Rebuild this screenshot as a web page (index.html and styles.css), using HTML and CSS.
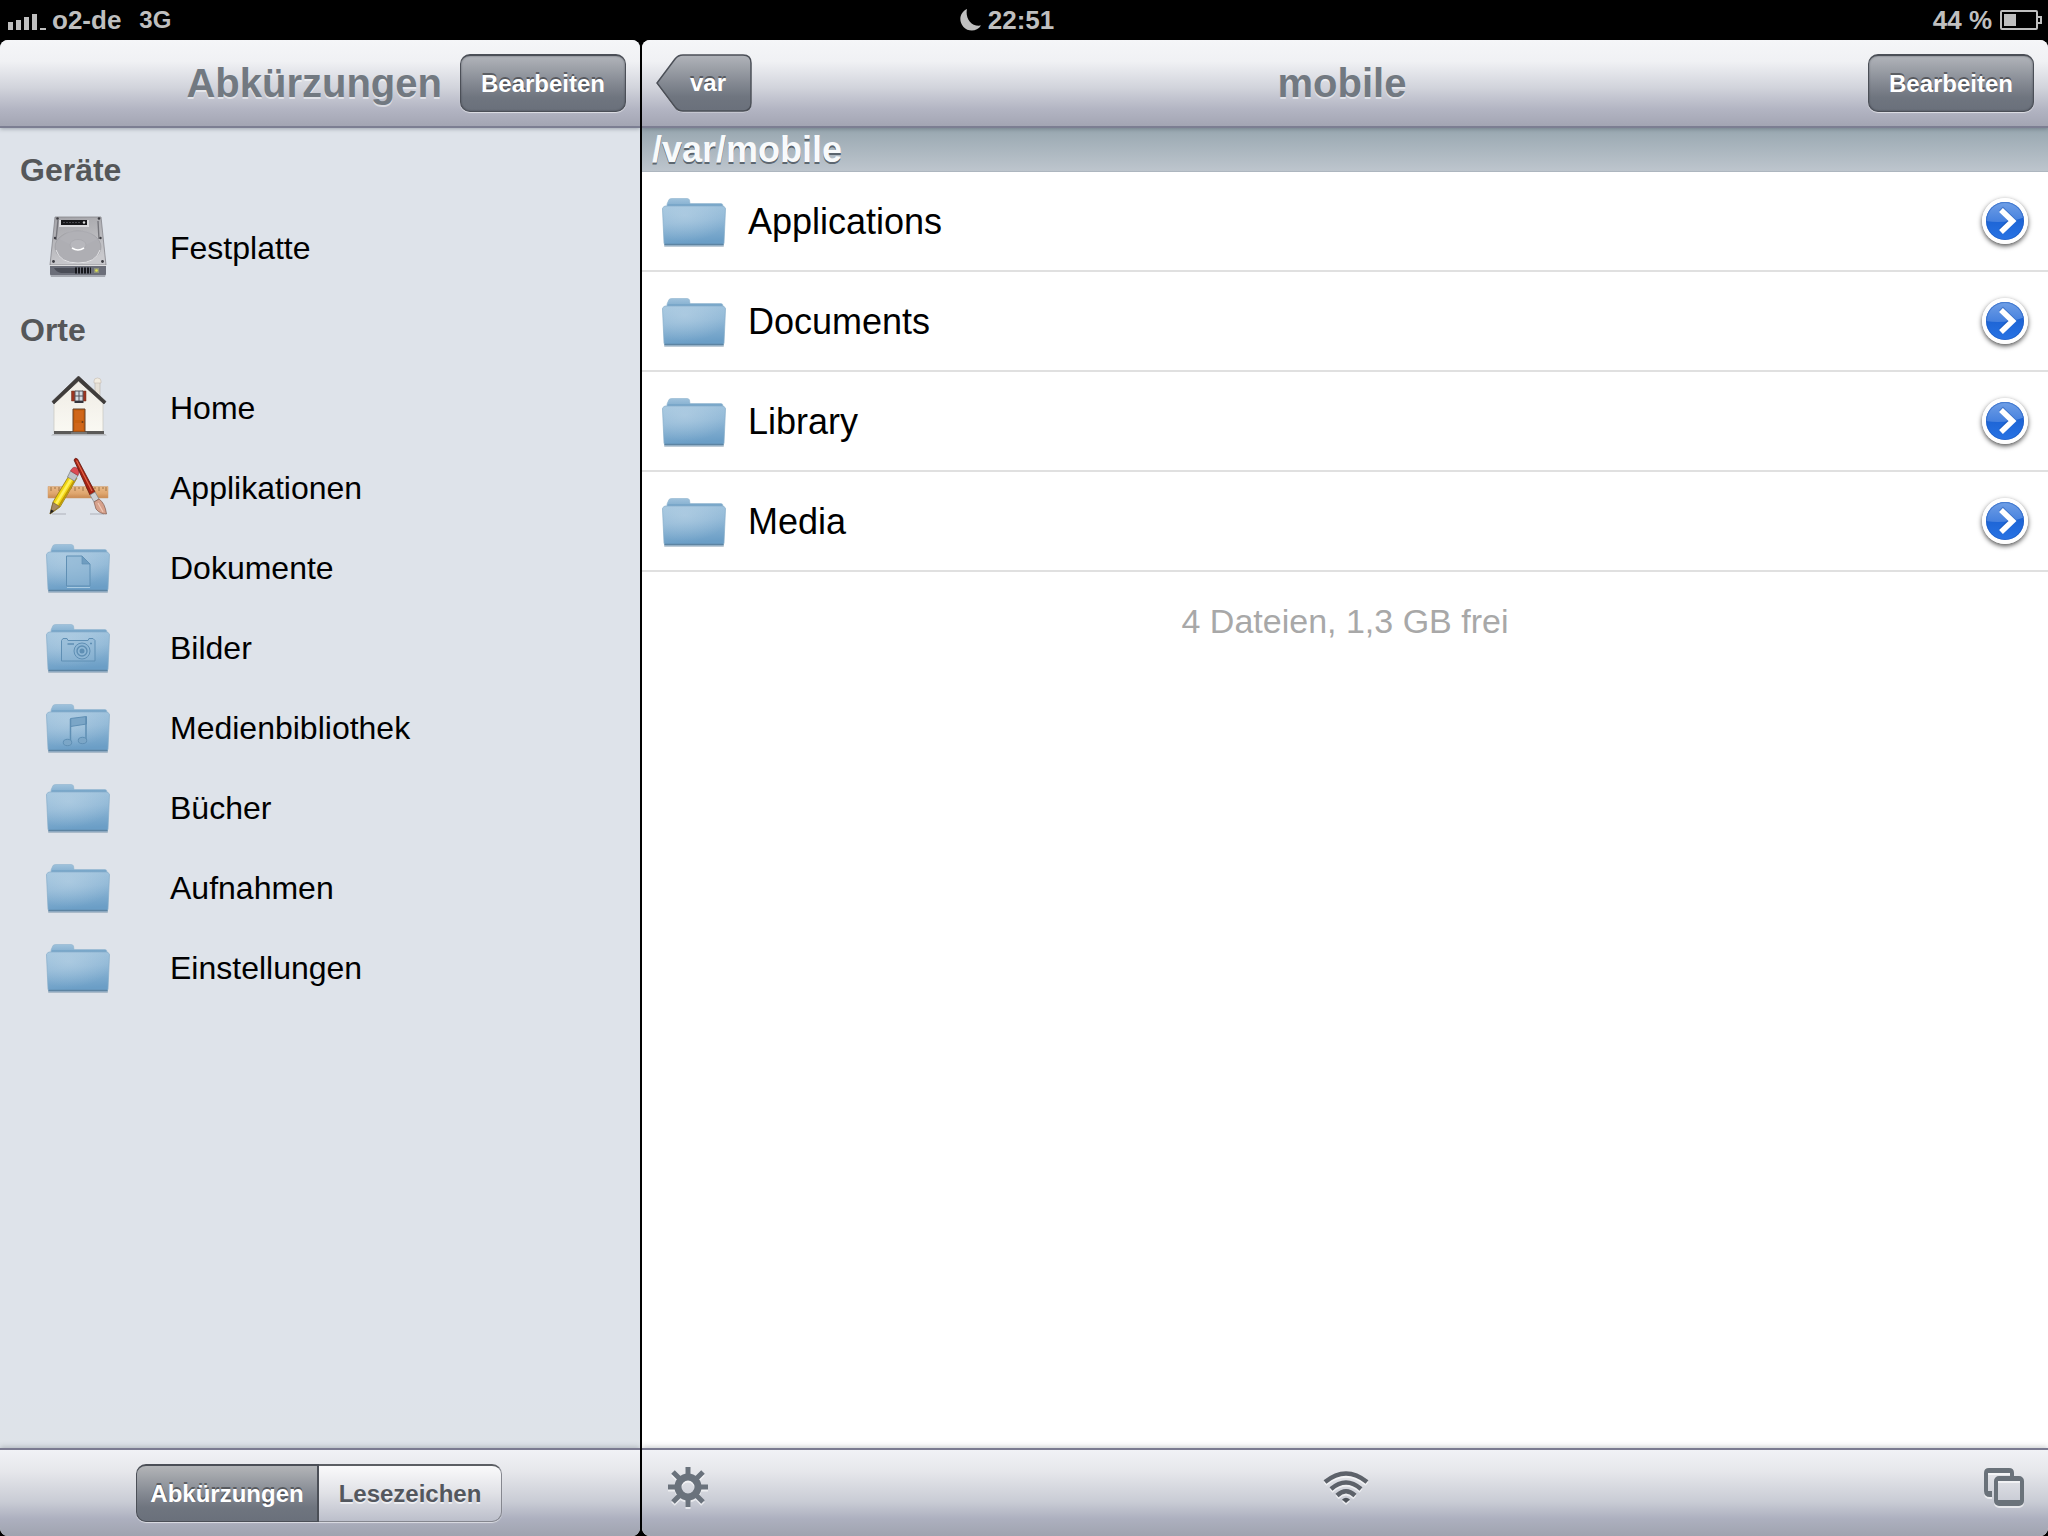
FILE: index.html
```html
<!DOCTYPE html>
<html lang="de">
<head>
<meta charset="utf-8">
<meta name="viewport" content="width=device-width, initial-scale=1">
<title>mobile</title>
<link rel="stylesheet" href="styles.css">
</head>
<body>
<svg class="defs" aria-hidden="true">
  <defs>
    <linearGradient id="folder-front" x1="0" y1="0" x2="0.15" y2="1">
      <stop offset="0" stop-color="#a4c6df"/><stop offset="0.45" stop-color="#92b9d7"/><stop offset="1" stop-color="#6b9ec6"/>
    </linearGradient>
    <radialGradient id="folder-glow" cx="0.35" cy="0.25" r="0.7">
      <stop offset="0" stop-color="#c6dbea" stop-opacity="0.4"/><stop offset="1" stop-color="#c6dbea" stop-opacity="0"/>
    </radialGradient>
    <linearGradient id="folder-back" x1="0" y1="0" x2="0" y2="1">
      <stop offset="0" stop-color="#9fc2dc"/><stop offset="1" stop-color="#6d9fc5"/>
    </linearGradient>
    <linearGradient id="back-fill" x1="0" y1="0" x2="0" y2="1">
      <stop offset="0" stop-color="#b1b4ba"/><stop offset="0.5" stop-color="#848992"/><stop offset="0.75" stop-color="#6f757f"/><stop offset="1" stop-color="#6a707b"/>
    </linearGradient>
    <linearGradient id="disc-top" x1="0" y1="0" x2="0" y2="1">
      <stop offset="0" stop-color="#6f9fe6"/><stop offset="1" stop-color="#4580de"/>
    </linearGradient>
    <linearGradient id="disc-bottom" x1="0" y1="0" x2="0" y2="1">
      <stop offset="0.4" stop-color="#1b62d3"/><stop offset="1" stop-color="#2873e4"/>
    </linearGradient>
    <linearGradient id="disk-top" x1="0" y1="0" x2="0.3" y2="1">
      <stop offset="0" stop-color="#a3a3a8"/><stop offset="0.5" stop-color="#b6b6ba"/><stop offset="1" stop-color="#c9c9cd"/>
    </linearGradient>
    <linearGradient id="house-wall" x1="0" y1="0" x2="0" y2="1">
      <stop offset="0" stop-color="#eeebe4"/><stop offset="1" stop-color="#faf9f3"/>
    </linearGradient>
    <linearGradient id="ruler-wood" x1="0" y1="0" x2="0" y2="1">
      <stop offset="0" stop-color="#e9b988"/><stop offset="0.6" stop-color="#dfa66e"/><stop offset="1" stop-color="#c98a52"/>
    </linearGradient>
    <symbol id="folder" viewBox="0 0 64 64">
      <rect x="2" y="54" width="60" height="3" rx="1" fill="#5d7e98" opacity="0.4"/>
      <path d="M5 14 L7 9.500 Q8 8.500 10 8.500 H25 Q27 8.500 27.500 10 L28 13.500 H59 Q61 13.500 61 16 V22 H5Z" fill="url(#folder-back)" stroke="#8fb3ce" stroke-width="0.6"/>
      <path d="M6 15 H60" stroke="#6b9cc2"/>
      <path d="M0.500 18.500 Q1.500 16 3.500 16 H60.500 Q62.500 16 63.500 18.500 L62 53 Q61.800 55 60 55 H4 Q2.200 55 2 53Z" fill="url(#folder-front)" stroke="#86adca" stroke-width="0.7"/>
      <path d="M1 18 Q2 16.500 3.500 16.500 H60.500 Q62 16.500 63 18 L61.500 53 H2.500Z" fill="url(#folder-glow)"/>
      <path d="M2.500 54.500 H61.500" stroke="#5d84a2" stroke-width="1.500"/>
    </symbol>
    <symbol id="disclosure" viewBox="0 0 46 46">
      <circle cx="23" cy="23" r="23" fill="#fff"/>
      <circle cx="23" cy="23" r="19" fill="url(#disc-bottom)"/>
      <path d="M4 23 A19 19 0 0 1 42 23 V19.500 Q23 26 4 23Z" fill="url(#disc-top)"/>
      <circle cx="23" cy="23" r="18.500" fill="none" stroke="#1d57b8" stroke-opacity="0.5"/>
      <path d="M19 12 L30 23 L19 34" fill="none" stroke="#164da8" stroke-width="5.500" opacity="0.4" transform="translate(0 -1.500)"/>
      <path d="M19 12 L30.500 23 L19 34" fill="none" stroke="#fff" stroke-width="5.500"/>
    </symbol>
  </defs>
</svg>

<header class="status">
  <div class="status-left">
    <svg class="signal" viewBox="0 0 38 16" role="img" aria-label="Signal"><path d="M0 8h5v8H0zM8 6h5v10H8zM16 3h5v13h-5zM24 0h5v16h-5zM32 14h6v2h-6z" fill="#bfbfbf"/></svg>
    <span>o2-de</span>
    <span class="network">3G</span>
  </div>
  <div class="clock">
    <svg class="moon" viewBox="0 0 21 22" aria-hidden="true"><path d="M7 0 C5 9 11 18 21 16.500 C17 23 8 23 3.500 18 C-2 12 0 3 7 0Z" fill="#bfbfbf"/></svg>
    <span>22:51</span>
  </div>
  <div class="status-right">
    <span>44 %</span>
    <svg class="battery" viewBox="0 0 42 20" role="img" aria-label="Batterie"><path d="M1 2 Q1 1 2 1 H36 Q37 1 37 2 V18 Q37 19 36 19 H2 Q1 19 1 18Z M38 7 H41 V13 H38" fill="none" stroke="#bfbfbf" stroke-width="2"/><path d="M4 4h12v12H4z" fill="#bfbfbf"/></svg>
  </div>
</header>

<div class="split">
  <aside class="pane sidebar">
    <header class="navbar">
      <h2 class="nav-title">Abkürzungen</h2>
      <button class="btn" type="button">Bearbeiten</button>
    </header>
    <nav class="places">
      <h3>Geräte</h3>
      <ul>
        <li><a href="#festplatte">
          <svg class="icon" viewBox="0 0 64 64" aria-hidden="true">
            <path d="M4 58 H60 L59 61 H5Z" fill="#6c7078" opacity="0.5"/>
            <path d="M9 1 H55 L60 49 H4Z" fill="url(#disk-top)" stroke="#85858b" stroke-width="0.8"/>
            <path d="M12 4 L10 24 M52 5 L53 23" stroke="#74747a" stroke-width="1.400" fill="none"/>
            <ellipse cx="32" cy="31" rx="23" ry="16" fill="#aeaeb3" stroke="#98989e" stroke-width="0.6"/>
            <path d="M10 34 Q14 47 32 47 Q50 47 54 34" fill="none" stroke="#e4e4e7"/>
            <path d="M13 23 L23 15 H42 L52 23 L40 29 L25 29Z" fill="#b4b4b9" opacity="0.5"/>
            <ellipse cx="32" cy="29" rx="8" ry="5.500" fill="#b7b7bc" stroke="#a4a4a9" stroke-width="0.6"/>
            <path d="M26 32 Q32 36 38 32" fill="none" stroke="#fff" stroke-width="1.600"/>
            <path d="M13 4 H43 V11 H13Z" fill="#dadadd"/><path d="M15 4 H41 V9 H15Z" fill="#17171a"/>
            <path d="M17 6.500 H34" stroke="#4a4a50" stroke-dasharray="2 1"/><circle cx="38" cy="6.500" r="1.200" fill="#ddd"/>
            <path d="M4 49 H60 V58 Q60 59 59 59 H5 Q4 59 4 58Z" fill="#6b6e79"/>
            <path d="M4 49.500 H60" stroke="#dededf" stroke-width="1.200"/>
            <path d="M8 52 H30 V57 H15 Q10 56 8 52Z" fill="#4a4d57"/>
            <path d="M29 54.500 H45" stroke="#17181d" stroke-width="6" stroke-dasharray="2 1"/>
            <rect x="48" y="52" width="5" height="5" fill="#8f937c"/><circle cx="50.500" cy="54.500" r="1.300" fill="#dfe24c"/>
            <g fill="#3c3c42"><circle cx="11.500" cy="2.500" r="1.300"/><circle cx="53" cy="2.500" r="1.300"/><circle cx="9" cy="22" r="1.200"/><circle cx="54.500" cy="22" r="1.200"/><circle cx="7.500" cy="45.500" r="1.400"/><circle cx="56.500" cy="45.500" r="1.400"/></g>
          </svg>
          <span>Festplatte</span></a></li>
      </ul>
      <h3>Orte</h3>
      <ul>
        <li><a href="#home">
          <svg class="icon" viewBox="0 0 64 64" aria-hidden="true">
            <path d="M7 58 H59 L61 59.500 H5Z" fill="#777" opacity="0.4"/>
            <path d="M49 5 H54 V22 L49 16Z" fill="#e6e0d6" stroke="#b9b3aa" stroke-width="0.6"/>
            <path d="M48 5 Q48 2 51.500 2 Q55 2 55 5 V7 H48Z" fill="#f2ece0" stroke="#c2bab0" stroke-width="0.6"/>
            <path d="M32 3 L57 27 V57 H8 V27Z" fill="url(#house-wall)" stroke="#c9c6be" stroke-width="0.7"/>
            <path d="M32.500 0 L60 25.500 L58 28 L32.500 5 L8 28 L6 25.500Z" fill="#3f3c3a" stroke="#2f2c2b" stroke-width="0.6"/>
            <path d="M8 55 H58 V58 H8Z" fill="#5b5a58"/>
            <path d="M25.500 15 H29.500 V25 H25.500Z M36 15 H40 V25 H36Z" fill="#9c3420" stroke="#70301f" stroke-width="0.5"/>
            <path d="M29 15 H37 V25 H29Z" fill="#d4dbe2" stroke="#54535a"/><path d="M33 15 V25 M29 20 H37" stroke="#54535a"/>
            <path d="M28.500 25 H37.500 V27 H28.500Z" fill="#34343c"/>
            <path d="M27 33 H39 V56 H27Z" fill="#c9600f" stroke="#65422c"/>
            <path d="M29 35 H37 V44 H29Z M29 47 H37 V54 H29Z" fill="#d0661a"/><circle cx="36.500" cy="46" r="1" fill="#6c3b18"/>
            <path d="M25 56 H41 V58 H25Z" fill="#777674"/>
          </svg>
          <span>Home</span></a></li>
        <li><a href="#applikationen">
          <svg class="icon" viewBox="0 0 64 64" aria-hidden="true">
            <path d="M6 58 H20 M44 58 H58" fill="none" stroke="#8d929a" stroke-width="2" opacity="0.3"/>
            <path d="M2 30.500 H62 V42 H2Z" fill="url(#ruler-wood)" stroke="#ce9a68" stroke-width="0.5"/>
            <path d="M5 31 V35 M9 31 V33 M13 31 V35 M17 31 V33 M21 31 V35 M25 31 V33 M29 31 V35 M33 31 V33 M37 31 V35 M41 31 V33 M45 31 V35 M49 31 V33 M53 31 V35 M57 31 V33 M60 31 V35" stroke="#8c6336" stroke-width="0.8"/>
            <path d="M4 58 L7 46 L24 18 L31 22 L14 51Z" fill="#f1d513" stroke="#8f7814" stroke-width="0.8"/>
            <path d="M10 48 L27 20" stroke="#fff15a" stroke-width="2.500"/><path d="M13 50 L30 22" stroke="#bd9608" stroke-width="1.500"/>
            <path d="M4 58 L7 46.500 L13.500 50.500Z" fill="#a78a63" stroke="#6f5638" stroke-width="0.6"/><path d="M4 58 L5 53.500 L8 55Z" fill="#222"/>
            <path d="M21.500 21 L24.500 15 L32 19.500 L28.500 25Z" fill="#bfc3c8" stroke="#777c82" stroke-width="0.7"/>
            <path d="M24.500 15 Q27 9.500 31 12 Q34.500 14 32 19.500Z" fill="#dc4b53" stroke="#963039" stroke-width="0.6"/>
            <path d="M28 4 Q29 1 31.500 3 L49 36 L44 39Z" fill="#a52112" stroke="#60170e" stroke-width="0.8"/>
            <path d="M30.500 4.500 L46 35" stroke="#e0664a" stroke-width="1.200"/>
            <path d="M44 39 L49 36 L53 43 L48 46Z" fill="#cdd0d4" stroke="#7d8186" stroke-width="0.7"/>
            <path d="M48 46 L53 43 Q59 47 60.500 58 Q54 58 50 53Z" fill="#d6a18c" stroke="#80594b" stroke-width="0.7"/><path d="M52 47 L57 56" stroke="#f0c9b7" stroke-width="1.200"/>
          </svg>
          <span>Applikationen</span></a></li>
        <li><a href="#dokumente">
          <svg class="icon" viewBox="0 0 64 64" aria-hidden="true"><use href="#folder"/>
            <path d="M20.500 20 H36 L44 28 V50 H20.500Z" fill="#8db5d3" fill-opacity="0.6" stroke="#5f8fb4"/><path d="M36 20 V28 H44Z" fill="#6f9dc0" stroke="#5f8fb4" stroke-width="0.7"/><path d="M21 51.500 H44" stroke="#b9d5e8" stroke-width="0.8"/>
          </svg>
          <span>Dokumente</span></a></li>
        <li><a href="#bilder">
          <svg class="icon" viewBox="0 0 64 64" aria-hidden="true"><use href="#folder"/>
            <path d="M15.500 24.500 L17 22.500 H21 L22 24.500 H42 L43 22.500 H47 L49 24.500 V45 H15.500Z" fill="#8db5d3" fill-opacity="0.5" stroke="#5f8fb4"/>
            <circle cx="36" cy="35" r="8" fill="#8fb7d5" stroke="#5f8fb4"/><circle cx="36" cy="35" r="5" fill="none" stroke="#5f8fb4" stroke-width="1.400"/><circle cx="36" cy="35" r="2.500" fill="#5f8fb4"/>
            <path d="M21.500 28 H28 M44 27.500 H46" stroke="#5f8fb4" stroke-width="1.600"/>
          </svg>
          <span>Bilder</span></a></li>
        <li><a href="#medienbibliothek">
          <svg class="icon" viewBox="0 0 64 64" aria-hidden="true"><use href="#folder"/>
            <g fill="#7ba6c7" stroke="#5f8fb4"><path d="M24.500 22.500 L40.500 20.500 V28 L24.500 30.500Z"/><path d="M24.500 23 V46 M40 21 V44" stroke-width="1.500"/><ellipse cx="21.500" cy="46.500" rx="4.200" ry="3.200"/><ellipse cx="36.500" cy="44.500" rx="4.200" ry="3.200"/></g>
          </svg>
          <span>Medienbibliothek</span></a></li>
        <li><a href="#buecher"><svg class="icon" viewBox="0 0 64 64" aria-hidden="true"><use href="#folder"/></svg><span>Bücher</span></a></li>
        <li><a href="#aufnahmen"><svg class="icon" viewBox="0 0 64 64" aria-hidden="true"><use href="#folder"/></svg><span>Aufnahmen</span></a></li>
        <li><a href="#einstellungen"><svg class="icon" viewBox="0 0 64 64" aria-hidden="true"><use href="#folder"/></svg><span>Einstellungen</span></a></li>
      </ul>
    </nav>
    <footer class="toolbar toolbar-center">
      <div class="segmented" role="group" aria-label="Ansicht">
        <button type="button" class="segment selected" aria-pressed="true">Abkürzungen</button>
        <button type="button" class="segment" aria-pressed="false">Lesezeichen</button>
      </div>
    </footer>
  </aside>

  <main class="pane browser">
    <header class="navbar navbar-three">
      <button class="back" type="button">
        <svg class="back-shape" viewBox="0 0 96 59" aria-hidden="true">
          <path d="M27 2 H87 Q95 2 95 10 V50 Q95 58 87 58 H27 Q22 58 19 54 L1 30 L19 6 Q22 2 27 2Z" fill="none" stroke="#fff" stroke-opacity="0.55"/>
          <path d="M27 1 H87 Q95 1 95 9 V49 Q95 57 87 57 H27 Q22 57 19 53 L1 29 L19 5 Q22 1 27 1Z" fill="url(#back-fill)" stroke="#4b4f57" stroke-width="1.500"/>
        </svg>
        <span class="back-label">var</span>
      </button>
      <h1 class="nav-title">mobile</h1>
      <button class="btn" type="button">Bearbeiten</button>
    </header>
    <div class="path">/var/mobile</div>
    <ul class="files">
      <li><a href="#applications"><svg class="icon" aria-hidden="true"><use href="#folder"/></svg><span>Applications</span></a><button class="detail" type="button" aria-label="Details zu Applications"><svg class="detail-icon" aria-hidden="true"><use href="#disclosure"/></svg></button></li>
      <li><a href="#documents"><svg class="icon" aria-hidden="true"><use href="#folder"/></svg><span>Documents</span></a><button class="detail" type="button" aria-label="Details zu Documents"><svg class="detail-icon" aria-hidden="true"><use href="#disclosure"/></svg></button></li>
      <li><a href="#library"><svg class="icon" aria-hidden="true"><use href="#folder"/></svg><span>Library</span></a><button class="detail" type="button" aria-label="Details zu Library"><svg class="detail-icon" aria-hidden="true"><use href="#disclosure"/></svg></button></li>
      <li><a href="#media"><svg class="icon" aria-hidden="true"><use href="#folder"/></svg><span>Media</span></a><button class="detail" type="button" aria-label="Details zu Media"><svg class="detail-icon" aria-hidden="true"><use href="#disclosure"/></svg></button></li>
    </ul>
    <p class="summary">4 Dateien, 1,3 GB frei</p>
    <footer class="toolbar toolbar-icons">
      <button class="tool" type="button" aria-label="Einstellungen">
        <svg width="40" height="40" viewBox="-20 -20 40 40" aria-hidden="true">
          <g fill="none" stroke="#6a727c"><circle r="10" stroke-width="7"/><path d="M0 -12 V-20 M0 12 V20 M-12 0 H-20 M12 0 H20 M-8 -8 L-15 -15 M8 -8 L15 -15 M-8 8 L-15 15 M8 8 L15 15" stroke-width="5"/></g>
        </svg>
      </button>
      <button class="tool" type="button" aria-label="WLAN">
        <svg width="46" height="32" viewBox="0 0 46 32" aria-hidden="true">
          <g fill="none" stroke="#5d626a" stroke-width="4.500"><path d="M2 11 Q23 -6 44 11"/><path d="M8 18 Q23 5 38 18"/><path d="M14 24.500 Q23 16 32 24.500"/></g>
          <path d="M19 28.500 Q23 25 27 28.500 L23 32Z" fill="#4d5259"/>
        </svg>
      </button>
      <button class="tool" type="button" aria-label="Fenster">
        <svg width="40" height="40" viewBox="0 0 40 40" aria-hidden="true">
          <g fill="none" stroke="#6a727a" stroke-width="4"><path d="M8 28 H6 Q2 28 2 24 V6 Q2 3 5 3 H25 Q28 3 28 6 V10"/><rect x="12" y="11" width="26" height="26" rx="3"/></g>
          <path d="M2 3 H28 V6 H2Z M4 24 H8 V28 H4Z M13 12 H37 V14 H13Z M13 33 H37 V36 H13Z" fill="#6a727a"/>
        </svg>
      </button>
    </footer>
  </main>
</div>
</body>
</html>
```
FILE: styles.css
```css
* {
  box-sizing: border-box;
}

body {
  margin: 0;
  min-height: 100vh;
  display: flex;
  flex-direction: column;
  background: #000;
  color: #000;
  font-family: "Liberation Sans", Arial, sans-serif;
}

h1, h2, h3, ul, p {
  margin: 0;
  padding: 0;
}

ul {
  list-style: none;
}

a {
  color: inherit;
  text-decoration: none;
}

button {
  margin: 0;
  padding: 0;
  border: 0;
  background: none;
  font: inherit;
  cursor: pointer;
}

svg {
  display: block;
  flex: none;
}

.defs {
  position: absolute;
  width: 0;
  height: 0;
}

/* Status bar */
.status {
  height: 40px;
  padding: 0 6px 0 8px;
  display: grid;
  grid-template-columns: 1fr auto 1fr;
  align-items: center;
  color: #bfbfbf;
  font-size: 26px;
  font-weight: bold;
}

.status-left,
.status-right,
.clock {
  display: flex;
  align-items: center;
  gap: 8px;
}

.status-left {
  gap: 6px;
}

.status-right {
  justify-content: flex-end;
}

.signal {
  width: 38px;
  height: 16px;
  margin-top: 4px;
}

.network {
  margin-left: 12px;
  font-size: 24px;
}

.clock {
  position: relative;
  padding-right: 8px;
}

.moon {
  position: absolute;
  right: 100%;
  margin-right: 7px;
  width: 21px;
  height: 22px;
}

.battery {
  width: 42px;
  height: 20px;
}

/* Two panes */
.split {
  flex: 1;
  display: grid;
  grid-template-columns: 640px 1fr;
  gap: 2px;
}

.pane {
  display: flex;
  flex-direction: column;
  border-radius: 8px;
  overflow: hidden;
}

.sidebar {
  background: linear-gradient(#dee3ea 90%, #dee3e6);
}

.browser {
  background: #fff;
}

.navbar {
  position: relative;
  height: 88px;
  padding: 0 14px;
  display: flex;
  align-items: center;
  justify-content: flex-end;
  gap: 20px;
  border-bottom: 2px solid #7c7e92;
  background: linear-gradient(#f5f6f8, #f0f1f4 25%, #d2d4dc 55%, #b3b5c3 80%, #a3a5b3);
  box-shadow: 0 1px 4px rgba(60, 70, 80, 0.4);
}

.navbar-three {
  padding-right: 14px;
  display: grid;
  grid-template-columns: 1fr auto 1fr;
}

.navbar-three .btn {
  justify-self: end;
}

.navbar-three .nav-title {
  padding-right: 6px;
}

.nav-title {
  color: #727981;
  font-size: 40px;
  line-height: 48px;
  text-shadow: 0 2px 0 rgba(255, 255, 255, 0.5);
}

.btn {
  height: 58px;
  padding: 0 20px;
  border: 1px solid #4b4f57;
  border-top-width: 2px;
  border-radius: 10px;
  background: linear-gradient(#b1b4ba, #848992 50%, #6f757f 75%, #6a707b);
  box-shadow: 0 1px 1px rgba(255, 255, 255, 0.6), inset 0 0 2px rgba(40, 44, 52, 0.6);
  color: #fff;
  font-size: 24px;
  font-weight: bold;
  text-shadow: 0 -2px 0 rgba(0, 0, 0, 0.4);
}

.sidebar .nav-title {
  margin-right: -2px;
}

.back {
  position: relative;
  width: 96px;
  height: 58px;
  padding-left: 8px;
  color: #fff;
  font-size: 24px;
  font-weight: bold;
  text-shadow: 0 -2px 0 rgba(0, 0, 0, 0.4);
}

.back-shape {
  position: absolute;
  top: 0;
  left: 0;
  width: 96px;
  height: 59px;
}

.back-label {
  position: relative;
}

/* Sidebar list */
.places {
  flex: 1;
}

.places h3 {
  height: 80px;
  padding: 2px 20px 0;
  color: #555759;
  font-size: 32px;
  line-height: 80px;
}

.places a {
  height: 80px;
  padding-left: 46px;
  display: flex;
  align-items: center;
  gap: 60px;
  font-size: 32px;
}

.icon {
  width: 64px;
  height: 64px;
}

/* File list */
.path {
  height: 44px;
  padding: 0 10px;
  border-bottom: 1px solid #adb6bf;
  background: linear-gradient(#98a7b0, #bdc5cd);
  color: #f8fafb;
  font-size: 36px;
  font-weight: bold;
  line-height: 44px;
  text-shadow: 0 2px 0 rgba(40, 50, 60, 0.65);
}

.files li {
  height: 100px;
  padding: 0 20px;
  display: flex;
  align-items: center;
  border-bottom: 2px solid #e0e0e0;
}

.files a {
  flex: 1;
  padding-top: 2px;
  display: flex;
  align-items: center;
  gap: 22px;
  font-size: 36px;
}

.detail {
  border-radius: 50%;
  box-shadow: 0 2px 5px rgba(0, 0, 0, 0.7);
}

.detail-icon {
  width: 46px;
  height: 46px;
}

.summary {
  flex: 1;
  color: #a8a8a8;
  font-size: 34px;
  line-height: 98px;
  text-align: center;
}

/* Bottom bars */
.toolbar {
  height: 88px;
  display: flex;
  align-items: center;
  border-top: 2px solid #7b7b91;
  background: linear-gradient(#f1f2f6, #e6e7eb 25%, #c9ccd5 60%, #adb0bf 80%, #9fa3af);
  box-shadow: 0 -1px 5px rgba(60, 70, 80, 0.3);
}

.toolbar-center {
  padding-right: 2px;
  justify-content: center;
}

.toolbar-icons {
  padding: 0 24px 12px 26px;
  justify-content: space-between;
}

.tool svg {
  overflow: visible;
  filter: drop-shadow(0 2px 0 rgba(255, 255, 255, 0.6));
}

.segmented {
  height: 58px;
  display: flex;
  border-radius: 10px;
  box-shadow: 0 1px 1px rgba(255, 255, 255, 0.6);
}

.segment {
  width: 183px;
  border: 1px solid #85878f;
  border-top: 2px solid #5c5f64;
  border-left: 0;
  border-radius: 0 10px 10px 0;
  background: linear-gradient(#fafafb, #e0e1e6 50%, #bcbfcb);
  color: #53575e;
  font-size: 24px;
  font-weight: bold;
  text-shadow: 0 2px 0 rgba(255, 255, 255, 0.6);
}

.segment.selected {
  border: 1px solid #4b4f57;
  border-top-width: 2px;
  border-right-width: 2px;
  border-radius: 10px 0 0 10px;
  background: linear-gradient(#b3b5b8, #848992 50%, #6f757f 75%, #6a707b);
  color: #fff;
  text-shadow: 0 -2px 0 rgba(0, 0, 0, 0.4);
}
```
